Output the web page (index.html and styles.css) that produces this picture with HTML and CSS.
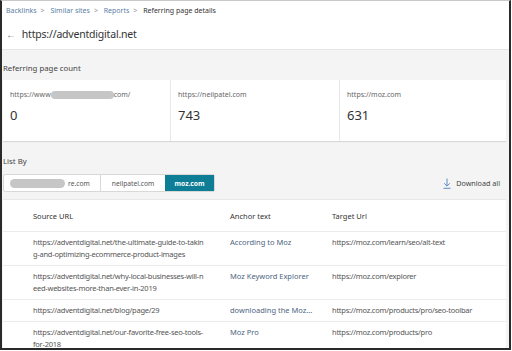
FILE: index.html
```html
<!DOCTYPE html>
<html lang="en">
<head>
    <meta charset="UTF-8">
    <title>Referring page details</title>
    <link rel="stylesheet" href="styles.css">
</head>
<body>
<div class="frame">
    <div class="header">
        <div class="crumbs">
            <a>Backlinks</a><span class="sep">&gt;</span>
            <a>Similar sites</a><span class="sep">&gt;</span>
            <a>Reports</a><span class="sep">&gt;</span>
            <span class="current">Referring page details</span>
        </div>
        <h1 class="title"><span class="back">&larr;</span>https://adventdigital.net</h1>
    </div>

    <div class="content">
        <div class="section-label">Referring page count</div>
        <div class="cards">
            <div class="card">
                <div class="card-url">https://www<span class="blur blur-card"></span>com/</div>
                <div class="card-num">0</div>
            </div>
            <div class="card">
                <div class="card-url">https://neilpatel.com</div>
                <div class="card-num">743</div>
            </div>
            <div class="card">
                <div class="card-url">https://moz.com</div>
                <div class="card-num">631</div>
            </div>
        </div>

        <div class="section-label list-label">List By</div>
        <div class="toolbar">
            <div class="tabs">
                <div class="tab tab-first"><span class="blur blur-tab"></span>re.com</div>
                <div class="tab tab-mid">neilpatel.com</div>
                <div class="tab active">moz.com</div>
            </div>
            <div class="download">
                <svg width="8" height="11" viewBox="0 0 8 11"><path d="M4 0.5v7.5M1.2 5.3l2.8 2.8 2.8-2.8M0.5 10.3h7" fill="none" stroke="#5b8cc8" stroke-width="1"/></svg>
                Download all
            </div>
        </div>

        <div class="table">
            <div class="row head">
                <div class="c-src">Source URL</div>
                <div class="c-anchor">Anchor text</div>
                <div class="c-target">Target Url</div>
            </div>
            <div class="row">
                <div class="c-src url">https://adventdigital.net/the-ultimate-guide-to-taking-and-optimizing-ecommerce-product-images</div>
                <div class="c-anchor">According to Moz</div>
                <div class="c-target url">https://moz.com/learn/seo/alt-text</div>
            </div>
            <div class="row">
                <div class="c-src url">https://adventdigital.net/why-local-businesses-will-need-websites-more-than-ever-in-2019</div>
                <div class="c-anchor">Moz Keyword Explorer</div>
                <div class="c-target url">https://moz.com/explorer</div>
            </div>
            <div class="row">
                <div class="c-src url">https://adventdigital.net/blog/page/29</div>
                <div class="c-anchor">downloading the Moz...</div>
                <div class="c-target url">https://moz.com/products/pro/seo-toolbar</div>
            </div>
            <div class="row">
                <div class="c-src url">https://adventdigital.net/our-favorite-free-seo-tools-for-2018</div>
                <div class="c-anchor">Moz Pro</div>
                <div class="c-target url">https://moz.com/products/pro</div>
            </div>
        </div>
    </div>
</div>
</body>
</html>
```

FILE: styles.css
```css
body {
    margin: 0;
    font-family: "Noto Sans", "Open Sans", sans-serif;
    color: #333;
}
.frame {
    width: 511px;
    height: 350px;
    box-sizing: border-box;
    border: 2px solid #2a2a2a;
    border-top: 1px solid #c8c8c8;
    background: #f4f4f4;
    overflow: hidden;
}
.header {
    background: white;
    height: 49px;
    border-bottom: 1px solid #e6e6e6;
    padding: 4px 5px 0 4px;
    box-sizing: border-box;
}
.crumbs {
    font-size: 7px;
    line-height: 11px;
    color: #5b7fa6;
}
.crumbs .sep {
    color: #999;
    margin: 0 4px;
}
.crumbs .current {
    color: #333;
}
.title {
    margin: 11px 0 0;
    font-size: 10.5px;
    letter-spacing: -0.2px;
    font-weight: normal;
    line-height: 14px;
    color: #333;
}
.back {
    color: #777;
    margin-right: 6px;
    font-size: 10px;
}
.content {
    padding: 0 3px 0 1px;
}
.section-label {
    font-size: 7.8px;
    line-height: 12px;
    color: #444;
    padding: 12px 0 6px;
}
.cards {
    display: flex;
    gap: 1px;
    background: #e8e8e8;
    box-shadow: 0 1px 1px #d8d8d8;
    height: 61px;
}
.card {
    background: white;
    padding: 10px 7px 0;
    box-sizing: border-box;
}
.card:nth-child(1) { width: 167px; }
.card:nth-child(2) { width: 168px; }
.card:nth-child(3) { flex: 1; }
.card-url {
    font-size: 7px;
    line-height: 10px;
    color: #666;
    display: flex;
    align-items: center;
}
.card-num {
    font-size: 13px;
    line-height: 16px;
    margin-top: 7px;
    color: #333;
}
.blur {
    display: inline-block;
    background: #c6c6c6;
    border-radius: 5px;
}
.blur-card {
    width: 63px;
    height: 8px;
}
.blur-tab {
    width: 55px;
    height: 9px;
    margin-right: 3px;
}
.list-label {
    padding: 14px 0 7px;
}
.toolbar {
    display: flex;
    justify-content: space-between;
    align-items: center;
    height: 18px;
}
.tabs {
    display: flex;
    height: 18px;
    border: 1px solid #d8d8d8;
    border-radius: 2px;
    box-sizing: border-box;
    background: white;
}
.tab {
    font-size: 6.7px;
    color: #555;
    display: flex;
    align-items: center;
    justify-content: center;
}
.tab-first {
    width: 97px;
    justify-content: flex-start;
    padding-left: 6px;
    box-sizing: border-box;
    border-right: 1px solid #d8d8d8;
}
.tab-mid {
    width: 64px;
}
.active {
    width: 49px;
    background: #0e7d96;
    color: white;
    font-weight: bold;
}
.download {
    font-size: 7.2px;
    color: #444;
    display: flex;
    align-items: center;
    gap: 5px;
    padding-right: 6px;
}
.table {
    background: white;
    margin-top: 7px;
    height: 160px;
    border-top: 1px solid #e8e8e8;
}
.row {
    display: flex;
    border-bottom: 1px solid #ececec;
    padding: 4px 0 5px;
    font-size: 7.5px;
    line-height: 12px;
    color: #555;
}
.row.head {
    padding: 10px 0 9px;
    color: #333;
}
.url {
    letter-spacing: -0.25px;
}
.c-src {
    width: 172px;
    margin-left: 30px;
    word-break: break-all;
}
.c-anchor {
    width: 102px;
    margin-left: 25px;
    color: #4d6482;
}
.head .c-anchor {
    color: #333;
}
.c-target {
    flex: 1;
}
```
